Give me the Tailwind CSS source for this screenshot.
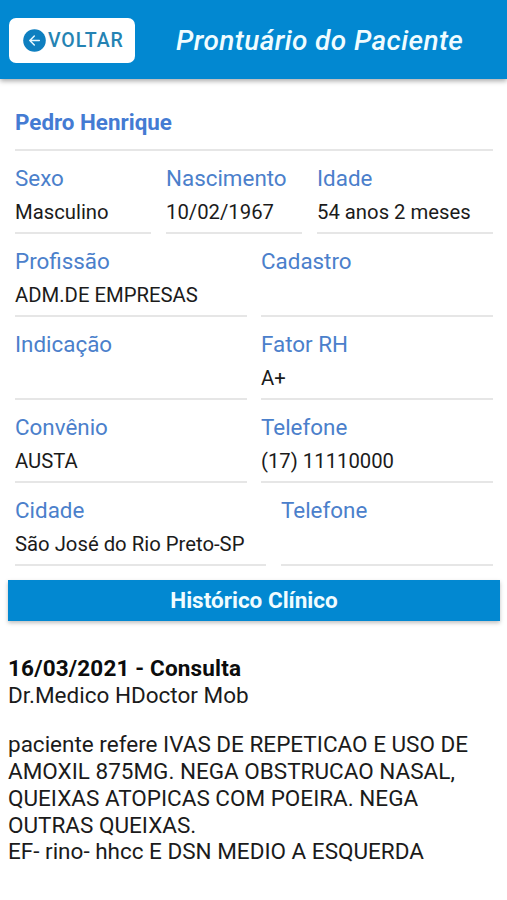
<!DOCTYPE html>
<html lang="pt-BR"><head><meta charset="utf-8"><title>Prontuário do Paciente</title>
<script src="https://cdn.jsdelivr.net/npm/@tailwindcss/browser@4"></script></head>
<body class="bg-white font-[Roboto,sans-serif] text-[#1b1b1b] w-[507px] h-[900px] overflow-hidden">
<header class="h-[79px] bg-[#0288d1] flex items-start shadow-[0_2px_5px_rgba(0,0,0,0.35)]">
<button class="mt-[18px] ml-[9px] w-[126px] h-[45px] shrink-0 bg-white rounded-[7px] flex items-center pl-[14px] text-[#2583b3]">
<svg class="w-[23px] h-[23px] shrink-0" viewBox="0 0 23 23"><circle cx="11.5" cy="11.5" r="11.3" fill="#0e7fc0"/><path d="M16.3 11.5H6.8M11.3 7l-4.5 4.5 4.5 4.5" fill="none" stroke="#e8f8ff" stroke-width="1.5" stroke-linecap="round" stroke-linejoin="round"/></svg>
<span class="ml-[2px] text-[19.5px] font-medium tracking-[0.9px]">VOLTAR</span></button>
<h1 class="ml-[41px] mt-[23px] text-[28px] leading-9 italic font-medium tracking-[0.4px] text-[#f0fcff] whitespace-nowrap">Prontuário do Paciente</h1>
</header>
<main class="text-[20.3px] leading-[26px] whitespace-nowrap">
<section class="pl-[15px] pr-[14px]">
<div class="h-[72px] pt-[30px] border-b-2 border-[#e6e6e6] text-[#447bd3] text-[22.4px] font-bold">Pedro Henrique</div>
<div class="flex gap-[15px]">
<div class="w-[136px] h-[83px] pt-[14px] border-b-2 border-[#e6e6e6]"><div class="text-[22.4px] text-[#4b80cb]">Sexo</div><div class="mt-[8px]">Masculino</div></div>
<div class="w-[136px] h-[83px] pt-[14px] border-b-2 border-[#e6e6e6]"><div class="text-[22.4px] text-[#4b80cb]">Nascimento</div><div class="mt-[8px]">10/02/1967</div></div>
<div class="flex-1 h-[83px] pt-[14px] border-b-2 border-[#e6e6e6]"><div class="text-[22.4px] text-[#4b80cb]">Idade</div><div class="mt-[8px]">54 anos 2 meses</div></div>
</div>
<div class="grid grid-cols-[232px_232px] gap-x-[14px]">
<div class="h-[83px] pt-[14px] border-b-2 border-[#e6e6e6]"><div class="text-[22.4px] text-[#4b80cb]">Profissão</div><div class="mt-[8px]">ADM.DE EMPRESAS</div></div>
<div class="h-[83px] pt-[14px] border-b-2 border-[#e6e6e6]"><div class="text-[22.4px] text-[#4b80cb]">Cadastro</div></div>
<div class="h-[83px] pt-[14px] border-b-2 border-[#e6e6e6]"><div class="text-[22.4px] text-[#4b80cb]">Indicação</div></div>
<div class="h-[83px] pt-[14px] border-b-2 border-[#e6e6e6]"><div class="text-[22.4px] text-[#4b80cb]">Fator RH</div><div class="mt-[8px]">A+</div></div>
<div class="h-[83px] pt-[14px] border-b-2 border-[#e6e6e6]"><div class="text-[22.4px] text-[#4b80cb]">Convênio</div><div class="mt-[8px]">AUSTA</div></div>
<div class="h-[83px] pt-[14px] border-b-2 border-[#e6e6e6]"><div class="text-[22.4px] text-[#4b80cb]">Telefone</div><div class="mt-[8px]">(17) 11110000</div></div>
</div>
<div class="flex gap-[15px]">
<div class="w-[251px] h-[83px] pt-[14px] border-b-2 border-[#e6e6e6]"><div class="text-[22.4px] text-[#4b80cb]">Cidade</div><div class="mt-[8px]">São José do Rio Preto-SP</div></div>
<div class="flex-1 h-[83px] pt-[14px] border-b-2 border-[#e6e6e6]"><div class="text-[22.4px] text-[#4b80cb]">Telefone</div></div>
</div>
</section>
<h2 class="mt-[14px] ml-2 mr-[7px] h-[41px] pb-[2px] bg-[#0288d1] shadow-[0_2px_4px_rgba(0,0,0,0.25)] flex items-center justify-center text-[#f0fcff] text-[22.5px] font-bold">Histórico Clínico</h2>
<article class="mt-[34px] px-2 text-[22.5px] leading-[26.7px]">
<h3 class="font-bold tracking-[0.16px] text-[#0c0c0c]">16/03/2021 - Consulta</h3>
<p>Dr.Medico HDoctor Mob</p>
<p class="mt-[23px]">paciente refere IVAS DE REPETICAO E USO DE<br>AMOXIL 875MG. NEGA OBSTRUCAO NASAL,<br>QUEIXAS ATOPICAS COM POEIRA. NEGA<br>OUTRAS QUEIXAS.<br>EF- rino- hhcc E DSN MEDIO A ESQUERDA</p>
</article>
</main></body></html>
